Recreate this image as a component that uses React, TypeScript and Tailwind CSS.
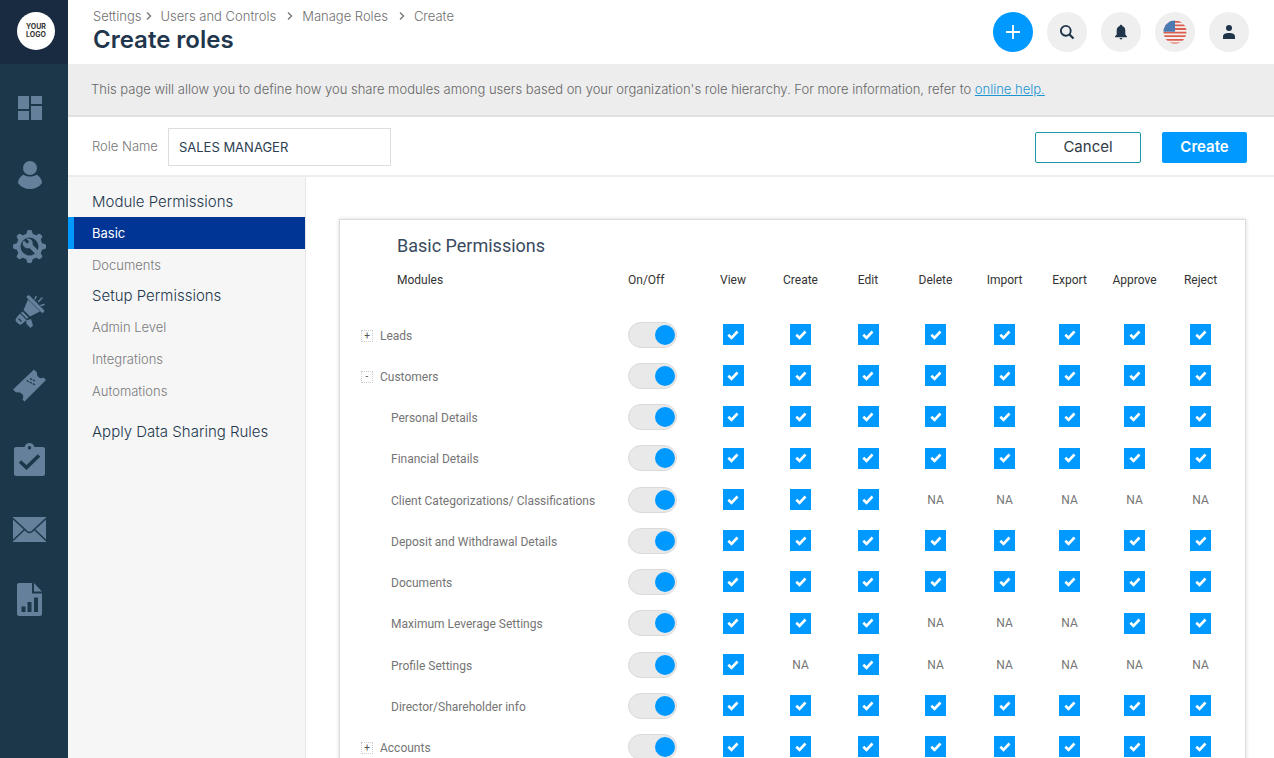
import type { ReactNode } from "react";

type Cell = 0 | 1;

type ModuleRow = {
  name: string;
  toggle?: "+" | "-";
  cells: Cell[];
};

const actions = [
  { label: "View", width: "w-[68px]" },
  { label: "Create", width: "w-[67px]" },
  { label: "Edit", width: "w-[68px]" },
  { label: "Delete", width: "w-[67px]" },
  { label: "Import", width: "w-[71px]" },
  { label: "Export", width: "w-[59px]" },
  { label: "Approve", width: "w-[71px]" },
  { label: "Reject", width: "w-[61px]" },
];

const rows: ModuleRow[] = [
  { name: "Leads", toggle: "+", cells: [1, 1, 1, 1, 1, 1, 1, 1] },
  { name: "Customers", toggle: "-", cells: [1, 1, 1, 1, 1, 1, 1, 1] },
  { name: "Personal Details", cells: [1, 1, 1, 1, 1, 1, 1, 1] },
  { name: "Financial Details", cells: [1, 1, 1, 1, 1, 1, 1, 1] },
  { name: "Client Categorizations/ Classifications", cells: [1, 1, 1, 0, 0, 0, 0, 0] },
  { name: "Deposit and Withdrawal Details", cells: [1, 1, 1, 1, 1, 1, 1, 1] },
  { name: "Documents", cells: [1, 1, 1, 1, 1, 1, 1, 1] },
  { name: "Maximum Leverage Settings", cells: [1, 1, 1, 0, 0, 0, 1, 1] },
  { name: "Profile Settings", cells: [1, 0, 1, 0, 0, 0, 0, 0] },
  { name: "Director/Shareholder info", cells: [1, 1, 1, 1, 1, 1, 1, 1] },
  { name: "Accounts", toggle: "+", cells: [1, 1, 1, 1, 1, 1, 1, 1] },
];

const menu = [
  { title: "Module Permissions", items: ["Basic", "Documents"] },
  { title: "Setup Permissions", items: ["Admin Level", "Integrations", "Automations"] },
];

/* Sidebar icons */

const DashboardIcon = () => (
  <svg width="24" height="24" viewBox="0 0 24 24" fill="currentColor">
    <path d="M0 0h11v13H0zM13 0h11v8H13zM0 15h11v9H0zM13 10h11v14H13z" />
  </svg>
);

const PersonIcon = () => (
  <svg width="24" height="28" viewBox="0 0 24 28" fill="currentColor">
    <circle cx="12" cy="7" r="7" />
    <path d="M5.500 13.500C8.500 16.200 15.500 16.200 18.500 13.500C22 15.500 24 18.500 24 22C21 26 17 28 12 28S3 26 0 22C0 18.500 2 15.500 5.500 13.500z" />
  </svg>
);

const GearIcon = () => (
  <svg width="33" height="33" viewBox="0 0 33 33" fill="none">
    <circle cx="16.500" cy="16.500" r="11" stroke="currentColor" strokeWidth="4" />
    {[0, 45, 90, 135, 180, 225, 270, 315].map((a) => (
      <path key={a} d="M13 5L14 1.200Q14.300 0 15.500 0H17.500Q18.700 0 19 1.200L20 5z" fill="currentColor" transform={`rotate(${a} 16.500 16.500)`} />
    ))}
    <path
      d="M11 10.500L14.200 13.700L16.200 11.600L13.200 8.800C17 7.600 20.600 10.800 19.600 14.800L26 21.200L23 24.500L16.400 18C12.500 19.400 8.600 15.500 10 11.500z"
      fill="currentColor"
    />
  </svg>
);

const MegaphoneIcon = () => (
  <svg width="30" height="33" viewBox="0 0 30 33" fill="none">
    <path d="M13.500 2L27.500 16" stroke="currentColor" strokeWidth="3.500" strokeLinecap="round" />
    <path d="M13 4.500L25 16.500L15 21.500L8.500 15z" fill="currentColor" />
    <path d="M7.500 16.500L13.500 22.500L12 24L6 18z" fill="currentColor" />
    <path d="M5 18.500L11.500 25L7 29Q5 30.500 3 28.500L1.300 26.700Q-.3 25 1.500 22.800z" fill="currentColor" />
    <path d="M3.500 23.500L6.500 26.500" stroke="#1c364a" strokeWidth="1.200" />
    <path d="M11 25.500L16 24L18 30.500L15.500 33L11.500 29z" fill="currentColor" />
    <path d="M20 4L21 1.500M23.500 6.500L27 3M26 10.500L29 9.500" stroke="currentColor" strokeWidth="1.500" strokeLinecap="round" />
  </svg>
);

const TicketIcon = () => (
  <svg width="33" height="33" viewBox="0 0 33 33" fill="none">
    <path
      d="M21 .5L24 3.500Q23.500 7.500 26.500 8.800Q28.500 9.800 30.500 8.500L33 11L11.500 32.500L9.500 30.500Q11.500 27 8.500 24.500Q6 22.500 3 23.500L0 20.500z"
      fill="currentColor"
    />
    <path d="M13.500 11.500L22.500 16M17 9.500L22 12" stroke="#1c364a" strokeWidth="1.200" strokeDasharray="2.500 1" />
  </svg>
);

const ClipboardIcon = () => (
  <svg width="31" height="33" viewBox="0 0 31 33" fill="none">
    <path
      fillRule="evenodd"
      d="M2 4H10.500C11.500 1.500 13 0 15.500 0S19.500 1.500 20.500 4H29Q31 4 31 6V31Q31 33 29 33H2Q0 33 0 31V6Q0 4 2 4zM15.500 3A1.700 1.700 0 1 0 15.500 6.400A1.700 1.700 0 1 0 15.500 3z"
      fill="currentColor"
    />
    <path d="M6 18.500L12.500 24.500L25 12.500" stroke="#1c364a" strokeWidth="3.500" />
  </svg>
);

const MailIcon = () => (
  <svg width="33" height="25" viewBox="0 0 33 25" fill="none">
    <rect width="33" height="25" fill="currentColor" />
    <path d="M0 1.500L14 14.500Q16.500 16.500 19 14.500L33 1.500M0 23.500L11.500 12.500M33 23.500L21.500 12.500" stroke="#1c364a" strokeWidth="1.500" />
  </svg>
);

const ReportIcon = () => (
  <svg width="25" height="33" viewBox="0 0 25 33" fill="none">
    <path d="M2 0H15V10.500H25V31Q25 33 23 33H2Q0 33 0 31V2Q0 0 2 0z" fill="currentColor" />
    <path d="M17 0L25 8.500H17z" fill="currentColor" />
    <path d="M4.500 23.500H8.500V29H4.500zM10.500 19H14.500V29H10.500zM17 14.500H21V29H17z" fill="#1c364a" />
  </svg>
);

const navGroups: { label: string; icon: ReactNode }[][] = [
  [
    { label: "Dashboard", icon: <DashboardIcon /> },
    { label: "Contacts", icon: <PersonIcon /> },
    { label: "Settings", icon: <GearIcon /> },
  ],
  [
    { label: "Marketing", icon: <MegaphoneIcon /> },
    { label: "Tickets", icon: <TicketIcon /> },
    { label: "Tasks", icon: <ClipboardIcon /> },
    { label: "Mail", icon: <MailIcon /> },
    { label: "Reports", icon: <ReportIcon /> },
  ],
];

/* Header icons */

const SearchIcon = () => (
  <svg width="16" height="16" viewBox="0 0 16 16" fill="none" stroke="currentColor">
    <circle cx="6.800" cy="6.800" r="4.900" strokeWidth="1.900" />
    <path d="M10.200 10.200L14.500 14.500" strokeWidth="2.200" />
  </svg>
);

const BellIcon = () => (
  <svg width="14" height="16" viewBox="0 0 14 16" fill="currentColor">
    <path d="M7 .8C7.900 .8 8.300 1.400 8.300 2C10.500 2.700 11.300 4.500 11.300 6.500V10.500L13 12.500V13.300H1V12.500L2.700 10.500V6.500C2.700 4.500 3.500 2.700 5.700 2C5.700 1.400 6.100 .8 7 .8zM5.500 14H8.500Q8.300 15.400 7 15.400T5.500 14z" />
  </svg>
);

const FlagIcon = () => (
  <svg width="24" height="24" viewBox="0 0 24 24">
    <defs>
      <clipPath id="flag">
        <circle cx="12" cy="12" r="11.500" />
      </clipPath>
    </defs>
    <g clipPath="url(#flag)">
      <rect width="24" height="24" fill="#f6eeee" />
      <path d="M0 1.800H24M0 5.400H24M0 9H24M0 12.600H24M0 16.200H24M0 19.800H24M0 23.400H24" stroke="#d9604f" strokeWidth="1.800" />
      <rect width="12" height="11.700" fill="#4a78b0" />
      <path d="M2 4H12M2 6.500H12M2 9H12" stroke="#6f97c4" strokeWidth=".7" strokeDasharray=".8 1.600" />
    </g>
  </svg>
);

const AccountIcon = () => (
  <svg width="14" height="16" viewBox="0 0 14 16" fill="currentColor">
    <circle cx="7" cy="4" r="3" />
    <path d="M1 15V12.500C1 10 3.500 9 7 9S13 10 13 12.500V15z" />
  </svg>
);

const headerButtons = [
  { label: "Search", icon: <SearchIcon /> },
  { label: "Notifications", icon: <BellIcon /> },
  { label: "Language", icon: <FlagIcon /> },
  { label: "Account", icon: <AccountIcon /> },
];

function Sidebar() {
  return (
    <aside className="w-[68px] shrink-0 bg-[#1c364a]">
      <div className="h-16 bg-[#182b40] pt-3 pl-1 flex justify-center items-start">
        <a href="#" className="w-[38px] h-[38px] rounded-full bg-white flex items-center justify-center text-center text-[7px] leading-2 font-bold text-[#333]">
          YOUR
          <br />
          LOGO
        </a>
      </div>
      <nav className="pt-8 pr-[9px] flex flex-col gap-8 text-[#64809a]">
        {navGroups.map((group, i) => (
          <ul key={i} className="flex flex-col items-center gap-[41px]">
            {group.map((item) => (
              <li key={item.label}>
                <a href="#" aria-label={item.label} className="block">
                  {item.icon}
                </a>
              </li>
            ))}
          </ul>
        ))}
      </nav>
    </aside>
  );
}

function Header() {
  const crumbs = ["Settings", "Users and Controls", "Manage Roles", "Create"];
  return (
    <header className="h-16 shrink-0 px-[25px] flex items-start justify-between bg-white">
      <div className="pt-1.5">
        <ol className="flex text-[13px] leading-5 font-light text-[#6f6f6f]">
          {crumbs.map((crumb, i) => (
            <li key={crumb} className="flex items-center gap-2.5 pr-2 first:gap-1 first:pr-[7px]">
              <a href="#">{crumb}</a>
              {i < crumbs.length - 1 && (
                <svg width="8" height="10" viewBox="0 0 8 10" fill="none" stroke="#777" strokeWidth="1.400">
                  <path d="M2 1.500L5.500 5L2 8.500" />
                </svg>
              )}
            </li>
          ))}
        </ol>
        <h1 className="text-2xl leading-7 font-semibold text-[#1f364d]">Create roles</h1>
      </div>
      <div className="pt-3 flex gap-3.5">
        <button aria-label="Add" className="w-10 h-10 rounded-full bg-[#0099ff] text-white flex items-center justify-center">
          <svg width="16" height="16" viewBox="0 0 16 16" stroke="currentColor" strokeWidth="1.800">
            <path d="M8 1V15M1 8H15" />
          </svg>
        </button>
        {headerButtons.map((b) => (
          <button key={b.label} aria-label={b.label} className="w-10 h-10 rounded-full bg-[#efefef] text-[#20354a] flex items-center justify-center">
            {b.icon}
          </button>
        ))}
      </div>
    </header>
  );
}

function PermissionsMenu() {
  return (
    <nav className="w-[238px] shrink-0 bg-[#f6f6f7] border-r border-[#e6e6e8] pt-2.5">
      {menu.map((section) => (
        <section key={section.title}>
          <h2 className="h-[30px] pl-6 flex items-center text-[15px] font-light text-[#24384d]">{section.title}</h2>
          <ul>
            {section.items.map((item) => (
              <li key={item}>
                <a
                  href="#"
                  className={
                    item === "Basic"
                      ? "h-8 flex items-center border-l-6 border-[#0099ff] bg-[#003595] pl-[18px] pt-0.5 text-[13px] text-white"
                      : "h-8 flex items-center pl-6 pt-0.5 text-[13px] font-light text-[#7a7a7a]"
                  }
                >
                  {item}
                </a>
              </li>
            ))}
          </ul>
        </section>
      ))}
      <h2 className="h-[30px] mt-2.5 pl-6 flex items-center text-[15px] font-light text-[#24384d]">
        <a href="#">Apply Data Sharing Rules</a>
      </h2>
    </nav>
  );
}

function Toggle({ label }: { label: string }) {
  return (
    <input
      type="checkbox"
      role="switch"
      defaultChecked
      aria-label={label}
      className="w-[49px] h-[26px] appearance-none flex items-center rounded-full border border-[#dadada] bg-[#e9e9e9] px-px checked:justify-end before:w-5 before:h-5 before:rounded-full before:bg-[#a8a8a8] checked:before:bg-[#0099ff]"
    />
  );
}

function PermissionCheck({ label }: { label: string }) {
  return (
    <label className="inline-grid place-items-center align-middle">
      <input
        type="checkbox"
        defaultChecked
        aria-label={label}
        className="peer col-start-1 row-start-1 w-[21px] h-[21px] appearance-none border border-[#0099ff] checked:bg-[#0099ff]"
      />
      <svg width="12" height="10" viewBox="0 0 12 10" fill="none" stroke="white" strokeWidth="2.600" className="col-start-1 row-start-1 pointer-events-none invisible peer-checked:visible">
        <path d="M1.300 4.800L4.500 7.800L10.500 1.500" />
      </svg>
    </label>
  );
}

function PermissionsTable() {
  return (
    <div className="flex-1 min-w-0 pl-[33px] pr-7 pt-[42px] bg-white overflow-y-auto [scrollbar-width:none]">
      <section className="pl-[21px] pr-3.5 pt-3 pb-6 border border-[#dcdce0] shadow-[0_0_4px_rgba(0,0,0,0.15)] font-['Roboto',sans-serif]">
        <h2 className="pl-9 text-lg leading-7 text-[#3a4a5e]">Basic Permissions</h2>
        <table className="w-full table-fixed text-xs">
          <thead>
            <tr className="h-[54px] align-top text-[#333]">
              <th className="pt-3 pl-9 text-left font-normal">Modules</th>
              <th className="w-[71px] pt-3 text-left font-normal">On/Off</th>
              {actions.map((a) => (
                <th key={a.label} className={`${a.width} pt-3 font-normal`}>
                  {a.label}
                </th>
              ))}
            </tr>
          </thead>
          <tbody>
            {rows.map((row) => (
              <tr key={row.name} className="h-[41px] nth-[4n]:h-[42px] text-[#757575]">
                <th scope="row" className="pt-0.5 text-left font-normal">
                  {row.toggle ? (
                    <span className="flex items-center gap-[7px]">
                      <button aria-label={`Toggle ${row.name}`} className="w-3 h-3 border border-dotted border-[#ccc] text-[10px] leading-[10px] text-[#555]">
                        {row.toggle}
                      </button>
                      {row.name}
                    </span>
                  ) : (
                    <span className="block pl-[30px]">{row.name}</span>
                  )}
                </th>
                <td>
                  <Toggle label={`${row.name} on or off`} />
                </td>
                {row.cells.map((on, i) => (
                  <td key={i} className="text-center">
                    {on ? <PermissionCheck label={`${row.name} ${actions[i].label}`} /> : "NA"}
                  </td>
                ))}
              </tr>
            ))}
          </tbody>
        </table>
      </section>
    </div>
  );
}

export default function App() {
  return (
    <div className="h-screen flex overflow-hidden bg-white font-['Inter',sans-serif]">
      <Sidebar />
      <div className="flex-1 min-w-0 flex flex-col">
        <Header />
        <p className="shrink-0 pt-[15px] pb-4 pl-[23px] pr-6 bg-[#ededed] border-b-2 border-[#e0e0e0] text-[13px] leading-5 font-light text-[#666]">
          This page will allow you to define how you share modules among users based on your organization's role hierarchy. For more information, refer to{" "}
          <a href="#" className="text-[#1a95d4] underline">
            online help.
          </a>
        </p>
        <form className="shrink-0 h-[60px] pt-0.5 pl-6 pr-[27px] flex items-center border-b-2 border-[#ededed]">
          <label htmlFor="role-name" className="text-[13px] font-light text-[#777]">
            Role Name
          </label>
          <input
            id="role-name"
            type="text"
            defaultValue="SALES MANAGER"
            className="w-[223px] h-[38px] ml-2.5 mr-auto px-2.5 border border-[#dedede] bg-white text-[13px] text-[#2c3e50]"
          />
          <button type="button" className="w-[106px] h-[31px] rounded-xs border border-[#1f95a8] bg-white text-[15px] text-[#2f3a45]">
            Cancel
          </button>
          <button type="button" className="w-[85px] h-[31px] ml-[21px] rounded-xs bg-[#0099ff] text-[15px] font-semibold text-white">
            Create
          </button>
        </form>
        <div className="flex-1 min-h-0 flex">
          <PermissionsMenu />
          <PermissionsTable />
        </div>
      </div>
    </div>
  );
}
